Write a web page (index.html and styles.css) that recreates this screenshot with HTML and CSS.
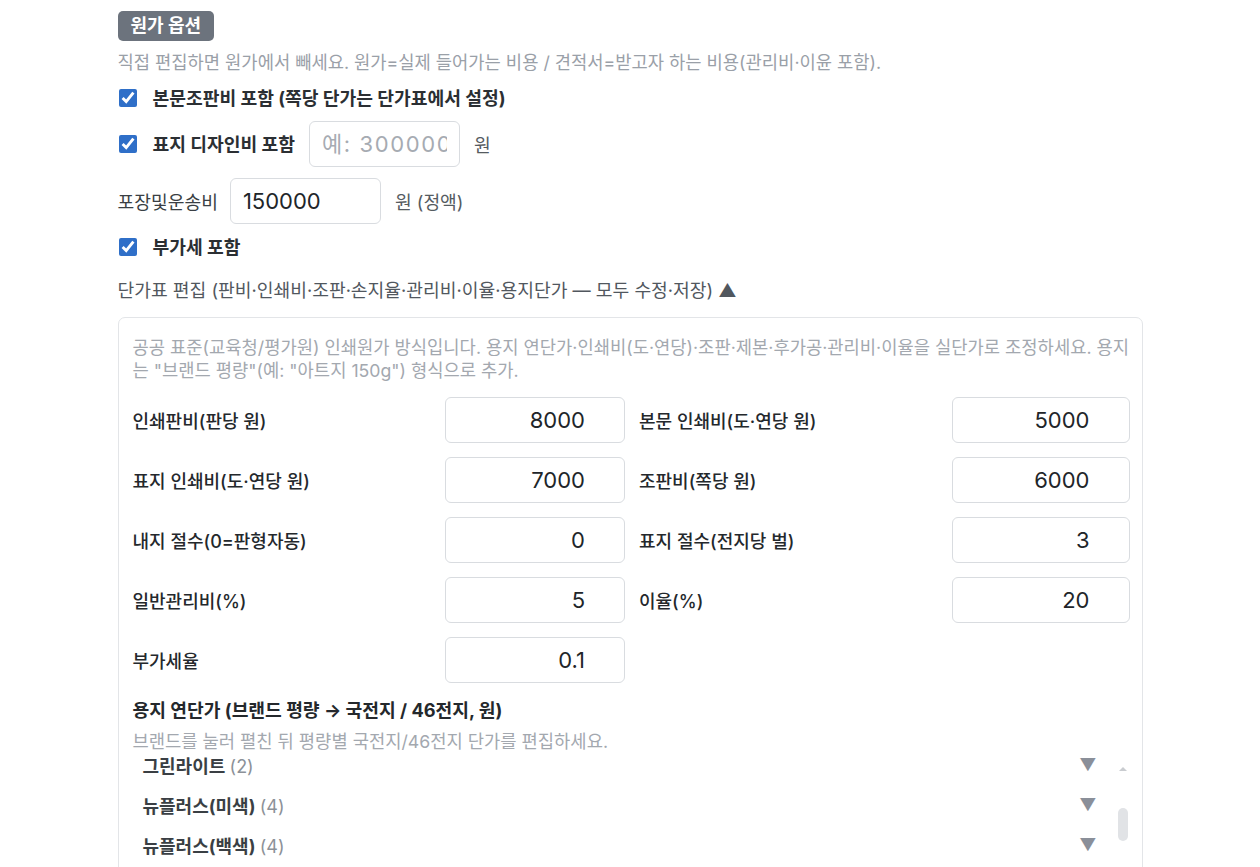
FILE: index.html
```html
<!DOCTYPE html>
<html lang="ko">
<head>
<meta charset="utf-8">
<title>원가 옵션</title>
<link rel="stylesheet" href="styles.css">
</head>
<body>
<div class="wrap">
  <div class="badge">원가 옵션</div>
  <p class="help">직접 편집하면 원가에서 빼세요. 원가=실제 들어가는 비용 / 견적서=받고자 하는 비용(관리비·이윤 포함).</p>

  <label class="row row-first check-row">
    <input type="checkbox" class="chk" checked>
    <span class="chk-label">본문조판비 포함 (쪽당 단가는 단가표에서 설정)</span>
  </label>

  <div class="row">
    <label class="check-row">
      <input type="checkbox" class="chk" checked>
      <span class="chk-label">표지 디자인비 포함</span>
    </label>
    <input type="text" class="field field-sm" placeholder="예: 300000">
    <span class="unit">원</span>
  </div>

  <div class="row">
    <span class="plain-label">포장및운송비</span>
    <input type="text" class="field" value="150000">
    <span class="unit">원 (정액)</span>
  </div>

  <label class="row check-row">
    <input type="checkbox" class="chk" checked>
    <span class="chk-label">부가세 포함</span>
  </label>

  <div class="toggle">단가표 편집 (판비·인쇄비·조판·손지율·관리비·이율·용지단가 — 모두 수정·저장) ▲</div>

  <div class="card">
    <p class="card-help">공공 표준(교육청/평가원) 인쇄원가 방식입니다. 용지 연단가·인쇄비(도·연당)·조판·제본·후가공·관리비·이율을 실단가로 조정하세요. 용지는 "브랜드 평량"(예: "아트지 150g") 형식으로 추가.</p>

    <div class="grid">
      <span class="g-label">인쇄판비(판당 원)</span>
      <input type="text" class="num" value="8000">
      <span class="g-label">본문 인쇄비(도·연당 원)</span>
      <input type="text" class="num" value="5000">

      <span class="g-label">표지 인쇄비(도·연당 원)</span>
      <input type="text" class="num" value="7000">
      <span class="g-label">조판비(쪽당 원)</span>
      <input type="text" class="num" value="6000">

      <span class="g-label">내지 절수(0=판형자동)</span>
      <input type="text" class="num" value="0">
      <span class="g-label">표지 절수(전지당 벌)</span>
      <input type="text" class="num" value="3">

      <span class="g-label">일반관리비(%)</span>
      <input type="text" class="num" value="5">
      <span class="g-label">이율(%)</span>
      <input type="text" class="num" value="20">

      <span class="g-label">부가세율</span>
      <input type="text" class="num" value="0.1">
    </div>

    <h3 class="paper-title">용지 연단가 (브랜드 평량 → 국전지 / 46전지, 원)</h3>
    <p class="paper-help">브랜드를 눌러 펼친 뒤 평량별 국전지/46전지 단가를 편집하세요.</p>

    <div class="brand-box">
      <div class="brand-list">
        <div class="brand"><span class="b-name">그린라이트 <span class="b-count">(2)</span></span><span class="caret">▼</span></div>
        <div class="brand"><span class="b-name">뉴플러스(미색) <span class="b-count">(4)</span></span><span class="caret">▼</span></div>
        <div class="brand"><span class="b-name">뉴플러스(백색) <span class="b-count">(4)</span></span><span class="caret">▼</span></div>
        <div class="brand"><span class="b-name">랑데뷰 <span class="b-count">(5)</span></span><span class="caret">▼</span></div>
        <div class="brand"><span class="b-name">모조지 <span class="b-count">(6)</span></span><span class="caret">▼</span></div>
        <div class="brand"><span class="b-name">스노우지 <span class="b-count">(6)</span></span><span class="caret">▼</span></div>
      </div>
      <div class="scroll-track" aria-hidden="true">
        <span class="scroll-up"></span>
        <span class="scroll-thumb"></span>
      </div>
    </div>
  </div>
</div>
</body>
</html>
```

FILE: styles.css
```css
* { box-sizing: border-box; }

html, body {
  margin: 0;
  padding: 0;
  background: #ffffff;
}

body {
  font-family: "Inter", "Noto Sans CJK KR", sans-serif;
  color: #212529;
  font-size: 18px;
}

.wrap {
  width: 1025px;
  margin: 0 auto;
  padding-top: 11px;
}

.badge {
  display: inline-block;
  height: 30px;
  line-height: 30px;
  padding: 0 13px;
  background: #6c737d;
  color: #ffffff;
  font-weight: 700;
  font-size: 18px;
  border-radius: 5px;
}

.help {
  margin: 11px 0 0;
  font-size: 17.7px;
  line-height: 22px;
  color: #9aa0a8;
  white-space: nowrap;
}

.row {
  display: flex;
  align-items: center;
  margin-top: 11px;
  min-height: 24px;
}

.row-first {
  margin-top: 12px;
}

.check-row {
  display: flex;
  align-items: center;
}

.chk {
  width: 18px;
  height: 18px;
  margin: 0 16px 0 1px;
  accent-color: #2f6fc8;
}

.chk-label {
  font-weight: 700;
  font-size: 18.2px;
  color: #2b2f33;
  line-height: 24px;
}

.plain-label {
  font-size: 18.2px;
  color: #3a3f44;
  margin-right: 12px;
}

.field {
  width: 151px;
  height: 46px;
  border: 1px solid #d9dce0;
  border-radius: 6px;
  padding: 0 12px;
  font-family: "Inter", "Noto Sans CJK KR", sans-serif;
  font-size: 22px;
  color: #212529;
  background: #ffffff;
  outline: none;
}

.field-sm {
  margin-left: 14px;
}

.field::placeholder {
  color: #a6abb2;
  letter-spacing: 1.6px;
}

.unit {
  margin-left: 14px;
  font-size: 18.2px;
  color: #555b61;
}

.toggle {
  margin-top: 19px;
  font-size: 18.2px;
  line-height: 24px;
  color: #51575e;
}

.card {
  margin-top: 15px;
  border: 1px solid #e3e5e8;
  border-radius: 7px;
  padding: 18px 12px 0 14px;
  height: 600px;
}

.card-help {
  margin: 0;
  font-size: 17.7px;
  line-height: 23px;
  color: #a3a8af;
}

.grid {
  margin-top: 15px;
  display: grid;
  grid-template-columns: 1fr 180px 1fr 178px;
  column-gap: 14px;
  row-gap: 14px;
  align-items: center;
}

.g-label {
  font-size: 18px;
  font-weight: 500;
  color: #24282c;
}

.num {
  width: 100%;
  height: 46px;
  border: 1px solid #d9dce0;
  border-radius: 6px;
  padding: 0 39px 0 12px;
  text-align: right;
  font-family: "Inter", "Noto Sans CJK KR", sans-serif;
  font-size: 22px;
  color: #212529;
  background: #ffffff;
  outline: none;
}

.paper-title {
  margin: 16px 0 0;
  font-size: 18.2px;
  line-height: 22px;
  font-weight: 700;
  color: #24282c;
}

.paper-help {
  margin: 10px 0 0;
  font-size: 17.7px;
  line-height: 22px;
  color: #a3a8af;
}

.brand-box {
  display: flex;
  margin-top: -8px;
  height: 130px;
}

.brand-list {
  flex: 1;
  overflow: hidden;
}

.brand {
  display: flex;
  justify-content: space-between;
  align-items: center;
  height: 40px;
  padding: 0 19px 0 10px;
}

.b-name {
  font-size: 18px;
  font-weight: 700;
  color: #3a3f44;
}

.b-count {
  font-weight: 400;
  color: #8c9198;
}

.caret {
  font-size: 17px;
  color: #8a8f99;
}

.scroll-track {
  width: 14px;
  display: flex;
  flex-direction: column;
  align-items: center;
  padding-top: 22px;
}

.scroll-up {
  width: 0;
  height: 0;
  border-left: 4px solid transparent;
  border-right: 4px solid transparent;
  border-bottom: 4px solid #c9ccd0;
}

.scroll-thumb {
  margin-top: 37px;
  width: 10px;
  height: 33px;
  border-radius: 5px;
  background: #e1e3e6;
}
```
